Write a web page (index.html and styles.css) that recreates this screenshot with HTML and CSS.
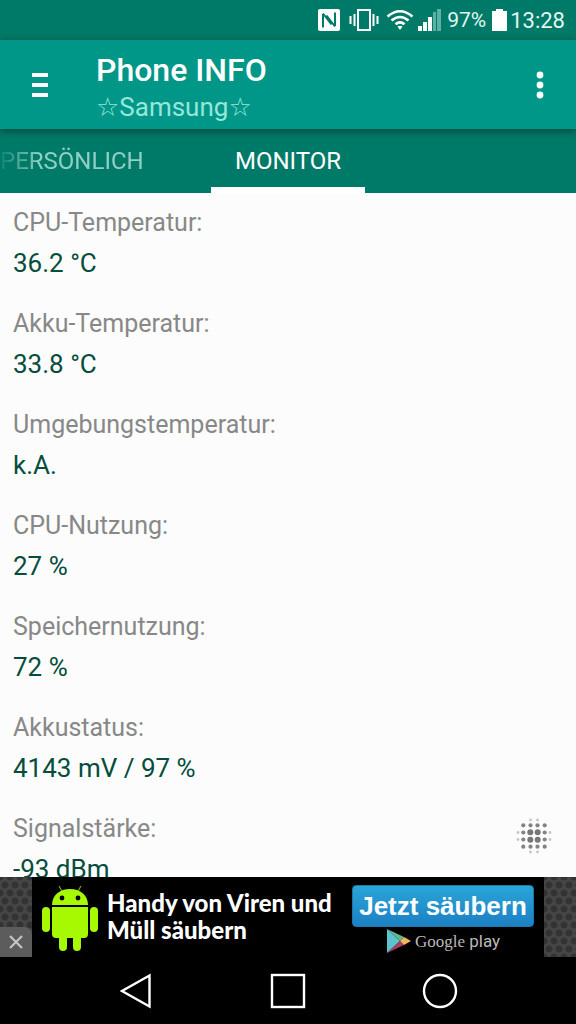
FILE: index.html
```html
<!DOCTYPE html>
<html lang="de">

<head>
  <meta charset="UTF-8">
  <meta name="viewport" content="width=device-width, initial-scale=1">
  <title>Phone INFO</title>
  <link rel="stylesheet" href="styles.css">
</head>

<body>
  <!-- Statusleiste -->
  <div class="statusbar">
    <svg class="icon-nfc" width="22" height="22" viewBox="0 0 22 22">
      <rect width="22" height="22" rx="2" fill="#fff"/>
      <path d="M5 18.500V5M5 4.500l8.500 11M17 3.500V17M17 17.500l-8.500-11" fill="none" stroke="#007a68" stroke-width="2"/>
    </svg>
    <svg class="icon-vibrate" width="30" height="24" viewBox="0 0 30 24">
      <path d="M1.500 8v8M5.500 6v12M24.500 6v12M28.500 8v8" stroke="#fff" stroke-width="2"/>
      <rect x="9" y="2" width="12" height="20" fill="none" stroke="#fff" stroke-width="2"/>
    </svg>
    <svg class="icon-wifi" width="28" height="22" viewBox="0 0 28 22">
      <path d="M1.500 7.500Q14-3 26.500 7.500M5.500 11.500Q14 4.500 22.500 11.500M9.500 15.300Q14 11.500 18.500 15.300" fill="none" stroke="#fff" stroke-width="2.600"/>
      <path d="M11.500 17.500L14 21l2.500-3.500Q14 16 11.500 17.500z" fill="#fff"/>
    </svg>
    <svg class="icon-signal" width="23" height="24" viewBox="0 0 23 24">
      <path d="M0 18h4v5H0zM5 14h4v9H5zM10 9h4v14h-4z" fill="#fff"/>
      <path d="M15 4h3v19h-3zM19 1h4v22h-4z" fill="#5fb0a4"/>
    </svg>
    <span class="percent">97%</span>
    <svg class="icon-battery" width="15" height="22" viewBox="0 0 15 22">
      <path d="M0 2h4V0h7v2h4v20H0z" fill="#fff"/>
    </svg>
    <span class="clock">13:28</span>
  </div>

  <!-- Kopfzeile -->
  <header class="appbar">
    <button class="menu" aria-label="Menü">
      <svg width="16" height="26" viewBox="0 0 16 26">
        <path d="M0 1h16v4H0zM0 11h16v4H0zM0 21h16v4H0z" fill="#fff"/>
      </svg>
    </button>
    <div class="titles">
      <h1>Phone INFO</h1>
      <p>☆Samsung☆</p>
    </div>
    <button class="more" aria-label="Mehr">
      <svg width="8" height="28" viewBox="0 0 8 28" fill="#fff">
        <circle cx="4" cy="4" r="3.400"/>
        <circle cx="4" cy="14" r="3.400"/>
        <circle cx="4" cy="24" r="3.400"/>
      </svg>
    </button>
  </header>

  <nav class="tabs">
    <button class="tab previous">PERSÖNLICH</button>
    <button class="tab active">MONITOR</button>
  </nav>

  <!-- Messwerte -->
  <main class="content">
    <dl class="values">
      <dt>CPU-Temperatur:</dt>
      <dd>36.2 °C</dd>
      <dt>Akku-Temperatur:</dt>
      <dd>33.8 °C</dd>
      <dt>Umgebungstemperatur:</dt>
      <dd>k.A.</dd>
      <dt>CPU-Nutzung:</dt>
      <dd>27 %</dd>
      <dt>Speichernutzung:</dt>
      <dd>72 %</dd>
      <dt>Akkustatus:</dt>
      <dd>4143 mV / 97 %</dd>
      <dt>Signalstärke:</dt>
      <dd>-93 dBm</dd>
    </dl>
    <svg class="dots" width="36" height="36" viewBox="0 0 36 36" fill="#777">
      <g opacity=".4">
        <circle cx="14.500" cy="2" r="1.400"/><circle cx="21.500" cy="2" r="1.400"/>
        <circle cx="14.500" cy="34" r="1.400"/><circle cx="21.500" cy="34" r="1.400"/>
        <circle cx="2" cy="14.500" r="1.400"/><circle cx="2" cy="21.500" r="1.400"/>
        <circle cx="34" cy="14.500" r="1.400"/><circle cx="34" cy="21.500" r="1.400"/>
      </g>
      <g opacity=".9">
        <circle cx="7.300" cy="7.300" r="2.100"/><circle cx="14.500" cy="7.300" r="2.100"/><circle cx="21.500" cy="7.300" r="2.100"/><circle cx="28.700" cy="7.300" r="2.100"/>
        <circle cx="7.300" cy="14.500" r="2.100"/><circle cx="28.700" cy="14.500" r="2.100"/>
        <circle cx="7.300" cy="21.500" r="2.100"/><circle cx="28.700" cy="21.500" r="2.100"/>
        <circle cx="7.300" cy="28.700" r="2.100"/><circle cx="14.500" cy="28.700" r="2.100"/><circle cx="21.500" cy="28.700" r="2.100"/><circle cx="28.700" cy="28.700" r="2.100"/>
      </g>
      <circle cx="14.300" cy="14.300" r="3"/><circle cx="21.700" cy="14.300" r="3"/>
      <circle cx="14.300" cy="21.700" r="3"/><circle cx="21.700" cy="21.700" r="3"/>
    </svg>
  </main>

  <!-- Werbebanner -->
  <aside class="ad">
    <div class="ad-side">
      <button class="ad-close" aria-label="Werbung schließen">
        <svg width="14" height="14" viewBox="0 0 14 14">
          <path d="M1 1l12 12M13 1L1 13" stroke="#c4c4c4" stroke-width="2.200"/>
        </svg>
      </button>
    </div>
    <div class="ad-body">
      <svg class="robot" width="56" height="68" viewBox="0 0 56 68" fill="#a6f900">
        <path d="M17 1l4 7M39 1l-4 7" stroke="#7da51c" stroke-width="1.200"/>
        <path d="M10 20C10 10 18 4 28 4s18 6 18 16z"/>
        <path d="M10 22h36v27q0 4-4 4H14q-4 0-4-4z"/>
        <rect x="0" y="22" width="8" height="25" rx="4"/>
        <rect x="48" y="22" width="8" height="25" rx="4"/>
        <path d="M17 50h8v12a4 4 0 0 1-8 0zM31 50h8v12a4 4 0 0 1-8 0z"/>
        <circle cx="20" cy="13" r="2.400" fill="#000"/>
        <circle cx="36" cy="13" r="2.400" fill="#000"/>
      </svg>
      <p class="ad-text">Handy von Viren und<br>Müll säubern</p>
      <div class="ad-action">
        <button class="ad-button">Jetzt säubern</button>
        <a class="play" href="#">
          <svg width="24" height="26" viewBox="0 0 24 26">
            <path d="M0 1v24l13-12z" fill="#5cc4cf"/>
            <path d="M0 1l17 8-4 4z" fill="#63b78f"/>
            <path d="M0 25l17-8-4-4z" fill="#a8405f"/>
            <path d="M17 9l7 4-7 4-4-4z" fill="#f2b562"/>
          </svg>
          <span><span class="google">Google</span> play</span>
        </a>
      </div>
    </div>
    <div class="ad-side"></div>
  </aside>

  <!-- Navigationstasten -->
  <footer class="navbar">
    <button aria-label="Zurück">
      <svg width="32" height="36" viewBox="0 0 32 36">
        <path d="M29.500 2.500v31L2 18z" fill="none" stroke="#fff" stroke-width="2.400"/>
      </svg>
    </button>
    <button aria-label="Startseite">
      <svg width="36" height="36" viewBox="0 0 36 36">
        <rect x="2" y="2" width="32" height="32" fill="none" stroke="#fff" stroke-width="2.400"/>
      </svg>
    </button>
    <button aria-label="Letzte Apps">
      <svg width="36" height="36" viewBox="0 0 36 36">
        <circle cx="18" cy="18" r="16" fill="none" stroke="#fff" stroke-width="2.400"/>
      </svg>
    </button>
  </footer>
</body>
</html>
```

FILE: styles.css
```css
* {
  box-sizing: border-box;
}
body {
  margin: 0;
  height: 100vh;
  display: flex;
  flex-direction: column;
  overflow: hidden;
  background-color: #fcfcfc;
  font-family: Roboto, "DejaVu Sans", sans-serif;
}
h1, p, dl, dd {
  margin: 0;
}
button {
  margin: 0;
  padding: 0;
  border: none;
  background: none;
  color: inherit;
  font-family: inherit;
  cursor: pointer;
}
svg {
  display: block;
  flex: none;
}

/* Statusleiste */
.statusbar {
  flex: none;
  height: 40px;
  padding-right: 11px;
  display: flex;
  align-items: center;
  justify-content: flex-end;
  background-color: #007a68;
  color: #e4f5f2;
  font-size: 22px;
}
.icon-nfc { margin-right: 9px; }
.icon-vibrate { margin-right: 7px; }
.icon-wifi { margin-right: 4px; }
.icon-signal { margin-right: 6px; }
.percent {
  margin-right: 6px;
  font-size: 21px;
}
.clock { margin-left: 3px; }

/* Kopfzeile */
.appbar {
  flex: none;
  height: 89px;
  display: flex;
  align-items: center;
  background-color: #009788;
  color: #fff;
  position: relative;
  box-shadow: 0 2px 8px rgba(0, 0, 0, 0.45);
}
.menu {
  width: 80px;
  height: 80px;
  display: flex;
  align-items: center;
  justify-content: center;
}
.titles {
  flex: 1;
  padding-top: 4px;
  padding-left: 16px;
}
.titles h1 {
  font-size: 32px;
  line-height: 40px;
  font-weight: 500;
}
.titles p {
  font-size: 26px;
  line-height: 34px;
  color: #96e6da;
}
.more {
  width: 72px;
  height: 80px;
  display: flex;
  align-items: center;
  justify-content: center;
}

.tabs {
  flex: none;
  height: 64px;
  display: flex;
  background-color: #007a68;
}
.tab {
  padding: 0 24px;
  border-bottom: 6px solid transparent;
  border-top: 6px solid transparent;
  color: #fff;
  font-size: 24px;
}
.tab.previous {
  width: 211px;
  padding: 0;
  text-align: left;
  color: #8fd0c4;
  -webkit-mask-image: linear-gradient(to right, rgba(0, 0, 0, 0.1), #000 40px);
  mask-image: linear-gradient(to right, rgba(0, 0, 0, 0.1), #000 40px);
}
.tab.active {
  border-bottom-color: #fff;
}

/* Messwerte */
.content {
  flex: 1;
  min-height: 0;
  overflow: hidden;
  position: relative;
}
.values {
  padding: 10px 13px;
  font-size: 26px;
}
.values dt {
  line-height: 40px;
  font-size: 25px;
  color: #888;
}
.values dd {
  line-height: 41px;
  margin-bottom: 20px;
  color: #054d3c;
}
.dots {
  position: absolute;
  right: 24px;
  bottom: 23px;
}

/* Werbebanner */
.ad {
  flex: none;
  height: 80px;
  display: flex;
  background-color: #000;
}
.ad-side {
  width: 32px;
  display: flex;
  align-items: flex-end;
  background-color: #464646;
  background-image:
    radial-gradient(circle, #333 3px, transparent 4px),
    radial-gradient(circle, #333 3px, transparent 4px);
  background-size: 10px 16px;
  background-position: 0 0, 5px 8px;
}
.ad-close {
  width: 32px;
  height: 30px;
  display: flex;
  align-items: center;
  justify-content: center;
  background-color: #5c5c5c;
  border-top-right-radius: 8px;
}
.ad-body {
  flex: 1;
  padding: 8px 10px;
  display: flex;
  align-items: flex-start;
}
.ad-text {
  flex: 1;
  padding-left: 9px;
  color: #fff;
  font-family: Lato, sans-serif;
  font-size: 24px;
  font-weight: 900;
  line-height: 27px;
  padding-top: 4px;
  white-space: nowrap;
}
.ad-action {
  width: 182px;
}
.ad-button {
  width: 100%;
  height: 42px;
  border: 1px solid #1779ae;
  border-radius: 4px;
  background-image: linear-gradient(#29a5d8, #1c80c4);
  color: #fff;
  font-family: "Liberation Sans", sans-serif;
  font-size: 26px;
  font-weight: bold;
}
.play {
  margin-top: 1px;
  padding-left: 35px;
  display: flex;
  align-items: center;
  gap: 4px;
  color: #b9b9b9;
  font-size: 17px;
  line-height: 24px;
  text-decoration: none;
  white-space: nowrap;
}
.google {
  font-family: "Liberation Serif", serif;
}

/* Navigationstasten */
.navbar {
  flex: none;
  height: 67px;
  padding: 0 60px;
  display: flex;
  justify-content: space-between;
  align-items: center;
  background-color: #000;
}
.navbar button {
  flex: 1;
  height: 66px;
  display: flex;
  align-items: center;
  justify-content: center;
}
```
